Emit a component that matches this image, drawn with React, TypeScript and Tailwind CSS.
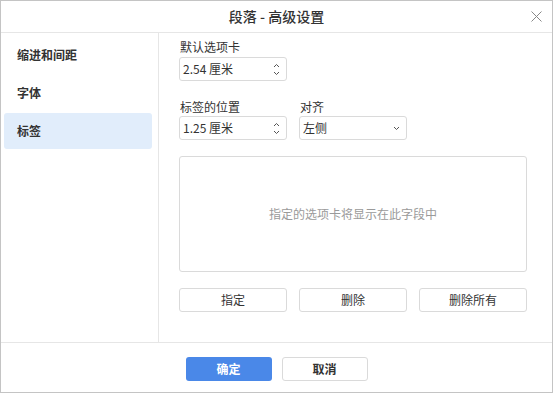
import React from "react";

const font = { fontFamily: '"Noto Sans CJK SC", "Noto Sans", sans-serif' };

function Spinner() {
  return (
    <div className="flex flex-col items-center justify-center gap-[3px] pr-[1px]">
      <svg width="7" height="5" viewBox="0 0 7 5" fill="none">
        <path d="M1 4 L3.5 1.5 L6 4" stroke="#555" strokeWidth="1" />
      </svg>
      <svg width="7" height="5" viewBox="0 0 7 5" fill="none">
        <path d="M1 1 L3.5 3.5 L6 1" stroke="#555" strokeWidth="1" />
      </svg>
    </div>
  );
}

function NumInput({ value }: { value: string }) {
  return (
    <div className="flex h-[24px] w-[108px] items-center justify-between rounded-[3px] border border-[#dadada] bg-white pl-[3px] pr-[5px]">
      <span className="text-[12px] leading-none text-[#333]">{value}</span>
      <Spinner />
    </div>
  );
}

export default function App() {
  return (
    <div
      className="flex h-[393px] w-[553px] flex-col border border-[#c4c4c4] bg-white text-[#333]"
      style={font}
    >
      <div className="relative flex h-[32px] shrink-0 items-center justify-center border-b border-[#e6e6e6]">
        <span className="text-[14px] font-medium text-[#333]">段落 - 高级设置</span>
        <svg
          className="absolute right-[10px] top-[10px]"
          width="11"
          height="11"
          viewBox="0 0 11 11"
          fill="none"
        >
          <path d="M0.5 0.5 L10.5 10.5 M10.5 0.5 L0.5 10.5" stroke="#888" strokeWidth="1" />
        </svg>
      </div>
      <div className="flex min-h-0 flex-1">
        <div className="flex w-[158px] shrink-0 flex-col gap-[2px] border-r border-[#e6e6e6] px-[3px] pt-[4px]">
          <div className="flex h-[36px] w-[148px] items-center rounded-[3px] pl-[13px] text-[12px] font-bold">
            缩进和间距
          </div>
          <div className="flex h-[36px] w-[148px] items-center rounded-[3px] pl-[13px] text-[12px] font-bold">
            字体
          </div>
          <div className="flex h-[36px] w-[148px] items-center rounded-[3px] bg-[#e1edfb] pl-[13px] text-[12px] font-bold">
            标签
          </div>
        </div>
        <div className="flex flex-1 flex-col pl-[20px] pr-[24px] pt-[6px]">
          <div className="flex flex-col">
            <span className="mb-[2px] pl-[1px] text-[12px] leading-[16px]">默认选项卡</span>
            <NumInput value="2.54 厘米" />
          </div>
          <div className="mt-[18px] flex gap-[12px]">
            <div className="flex flex-col">
              <span className="mb-[1px] pl-[1px] text-[12px] leading-[16px]">标签的位置</span>
              <NumInput value="1.25 厘米" />
            </div>
            <div className="flex flex-col">
              <span className="mb-[1px] pl-[1px] text-[12px] leading-[16px]">对齐</span>
              <div className="flex h-[24px] w-[108px] items-center justify-between rounded-[3px] border border-[#dadada] bg-white pl-[3px] pr-[6px]">
                <span className="text-[12px] leading-none text-[#333]">左侧</span>
                <svg width="7" height="5" viewBox="0 0 7 5" fill="none">
                  <path d="M1 1 L3.5 3.5 L6 1" stroke="#555" strokeWidth="1" />
                </svg>
              </div>
            </div>
          </div>
          <div className="mt-[16px] flex h-[116px] w-[348px] items-center justify-center rounded-[3px] border border-[#dadada]">
            <span className="text-[12px] text-[#9a9a9a]">指定的选项卡将显示在此字段中</span>
          </div>
          <div className="mt-[16px] flex gap-[12px]">
            <button className="h-[24px] w-[108px] rounded-[3px] border border-[#dadada] bg-white text-[12px] text-[#333]">
              指定
            </button>
            <button className="h-[24px] w-[108px] rounded-[3px] border border-[#dadada] bg-white text-[12px] text-[#333]">
              删除
            </button>
            <button className="h-[24px] w-[108px] rounded-[3px] border border-[#dadada] bg-white text-[12px] text-[#333]">
              删除所有
            </button>
          </div>
        </div>
      </div>
      <div className="flex h-[50px] shrink-0 items-start justify-center gap-[10px] border-t border-[#e6e6e6] pt-[14px]">
        <button className="h-[24px] w-[86px] rounded-[3px] bg-[#4a88e8] text-[12px] font-bold text-white">
          确定
        </button>
        <button className="h-[24px] w-[86px] rounded-[3px] border border-[#dadada] bg-white text-[12px] font-bold text-[#333]">
          取消
        </button>
      </div>
    </div>
  );
}
